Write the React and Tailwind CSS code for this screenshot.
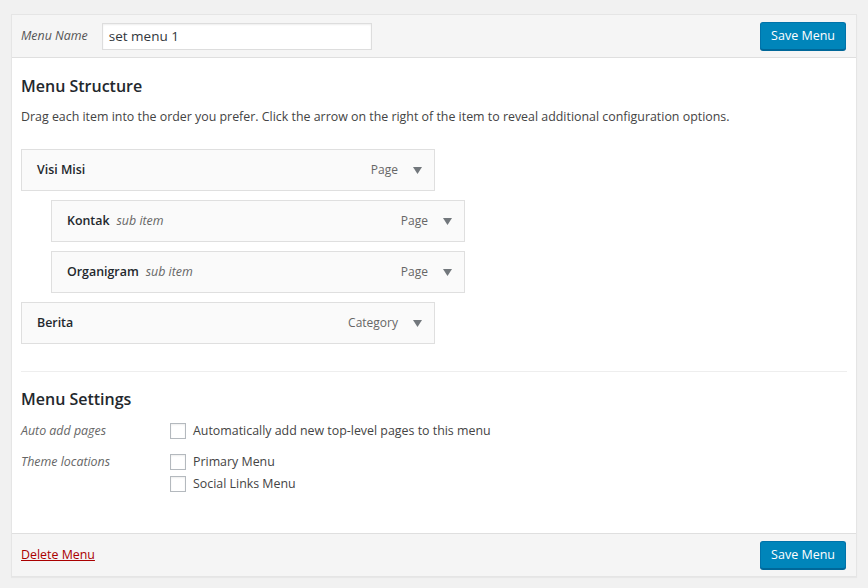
import React from "react";

const items = [
  { title: "Visi Misi", type: "Page", sub: false },
  { title: "Kontak", type: "Page", sub: true },
  { title: "Organigram", type: "Page", sub: true },
  { title: "Berita", type: "Category", sub: false },
];

const Arrow = () => (
  <svg width="9" height="7" viewBox="0 0 9 7" className="ml-[15px]">
    <path d="M0 0 L9 0 L4.5 7 Z" fill="#72777c" />
  </svg>
);

const SaveButton = () => (
  <button className="h-[28px] px-[10px] rounded-[3px] bg-[#0085ba] border border-[#0073aa] border-b-[#006799] text-white text-[12.5px] shadow-[0_1px_0_#006799]">
    Save Menu
  </button>
);

const Checkbox = () => (
  <span className="w-[16px] h-[16px] border border-[#b4b9be] bg-white shadow-[inset_0_1px_2px_rgba(0,0,0,0.07)] shrink-0" />
);

const MenuItem = ({ item }) => (
  <div
    className={`h-[42px] w-[414px] border border-[#dfdfdf] bg-[#fafafa] flex items-center pl-[15px] pr-[12px] ${
      item.sub ? "ml-[30px]" : ""
    }`}
  >
    <span className="font-semibold text-[#23282d]">{item.title}</span>
    {item.sub && <span className="italic text-[#666] ml-[7px]">sub item</span>}
    <span className="ml-auto text-[#666] text-[12px]">{item.type}</span>
    <Arrow />
  </div>
);

export default function App() {
  return (
    <div
      className="min-h-[588px] bg-[#f1f1f1] pt-[14px] px-[11px] text-[12.4px] text-[#444]"
      style={{ fontFamily: '"Open Sans", "Noto Sans", sans-serif' }}
    >
      <div className="border border-[#e5e5e5] bg-white shadow-[0_1px_1px_rgba(0,0,0,0.04)]">
        <div className="h-[43px] bg-[#f5f5f5] border-b border-[#dfdfdf] flex items-center pl-[9px] pr-[10px]">
          <span className="italic text-[#555]">Menu Name</span>
          <div className="ml-[14px] w-[270px] h-[27px] border border-[#ddd] bg-white flex items-center px-[6px] text-[#32373c] text-[13.5px] shadow-[inset_0_1px_2px_rgba(0,0,0,0.07)]">
            set menu 1
          </div>
          <div className="ml-auto">
            <SaveButton />
          </div>
        </div>

        <div className="pl-[9px] pr-[9px] h-[475px]">
          <h3 className="text-[16px] font-semibold text-[#23282d] pt-[15px] leading-[26px]">Menu Structure</h3>
          <p className="mt-[8px] leading-[20px] text-[#444]">
            Drag each item into the order you prefer. Click the arrow on the right of the item to reveal additional configuration options.
          </p>
          <div className="mt-[22px] flex flex-col gap-[9px]">
            {items.map((item) => (
              <MenuItem key={item.title} item={item} />
            ))}
          </div>
          <div className="mt-[27px] border-t border-[#eee]" />
          <h3 className="text-[16px] font-semibold text-[#23282d] mt-[14px] leading-[26px]">Menu Settings</h3>
          <div className="mt-[9px] flex">
            <div className="w-[149px] italic text-[#666] leading-[20px]">Auto add pages</div>
            <label className="flex items-center gap-[7px] leading-[20px]">
              <Checkbox />
              <span>Automatically add new top-level pages to this menu</span>
            </label>
          </div>
          <div className="mt-[11px] flex">
            <div className="w-[149px] italic text-[#666] leading-[20px]">Theme locations</div>
            <div className="flex flex-col gap-[2px]">
              <label className="flex items-center gap-[7px] leading-[20px]">
                <Checkbox />
                <span>Primary Menu</span>
              </label>
              <label className="flex items-center gap-[7px] leading-[20px]">
                <Checkbox />
                <span>Social Links Menu</span>
              </label>
            </div>
          </div>
        </div>

        <div className="h-[43px] bg-[#f5f5f5] border-t border-[#dfdfdf] flex items-center pl-[9px] pr-[10px]">
          <a href="#" className="text-[#a00] underline">Delete Menu</a>
          <div className="ml-auto">
            <SaveButton />
          </div>
        </div>
      </div>
    </div>
  );
}
